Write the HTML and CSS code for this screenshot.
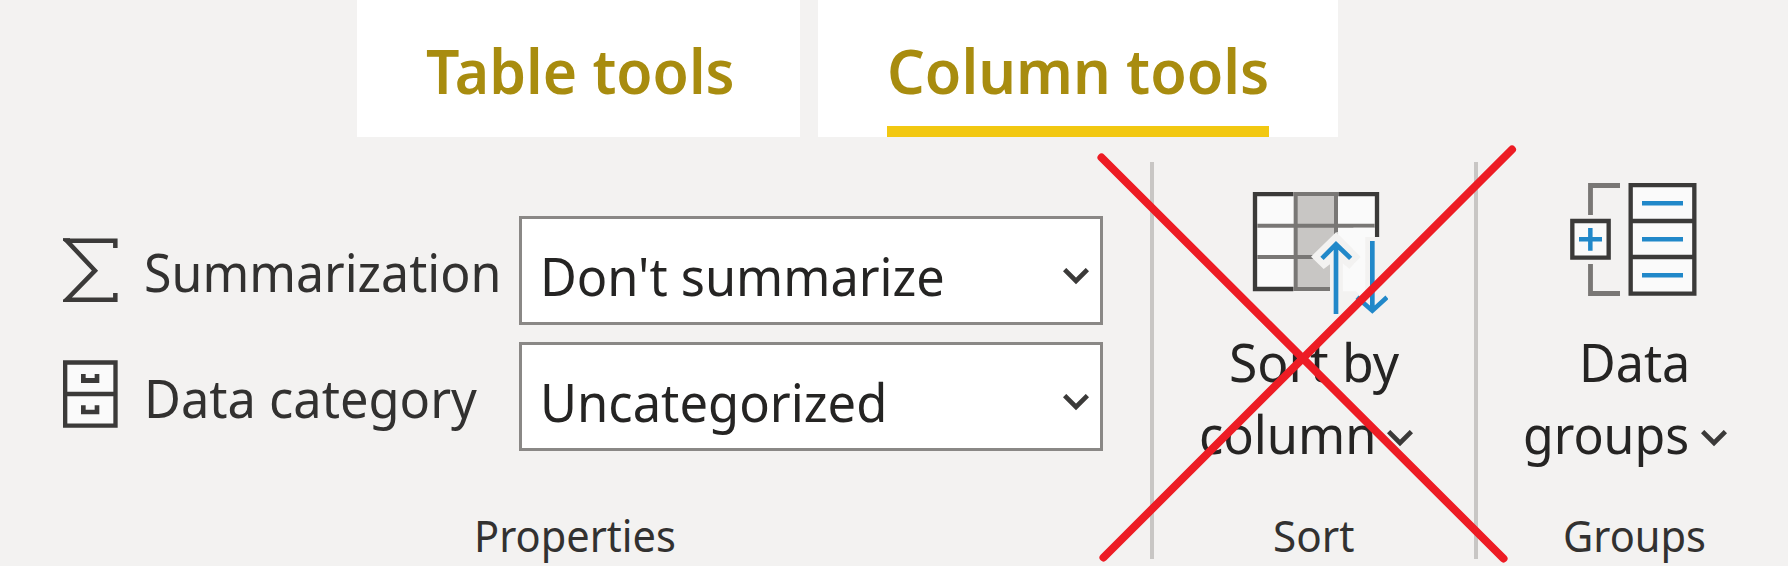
FILE: index.html
```
<!DOCTYPE html>
<html lang="en">
<head>
<meta charset="utf-8">
<title>Column tools</title>
<link rel="stylesheet" href="styles.css">
</head>
<body>
<div class="app">
  <nav class="tabs">
    <div class="tab tab-table"><span class="fit t-table">Table tools</span></div>
    <div class="tab tab-column active"><span class="fit t-column">Column tools</span></div>
  </nav>
  <main class="ribbon">
    <section class="group properties">
      <div class="fields">
        <div class="field">
          <svg class="field-icon" width="55" height="64" viewBox="39 54 165 192"><path d="M196 84V62H50L135 152L50 239H196V219" fill="none" stroke="#3b3a39" stroke-width="13.5"/><path d="M39 55H60V69H52L39 62ZM39 246H60V232H52L39 239Z" fill="#3b3a39"/></svg>
          <span class="fit label t-summarization">Summarization</span>
          <div class="select"><span class="fit t-dont">Don't summarize</span><svg class="chevron" width="26" height="17" viewBox="0 0 26 17"><path d="M1.6 1.6L13 13L24.4 1.6"/></svg></div>
        </div>
        <div class="field">
          <svg class="field-icon" width="55" height="68" viewBox="39 420 165 204"><path d="M45.500 427.500H196.500V617H45.500ZM45.500 522H196.500" fill="#fafafa" stroke="#3b3a39" stroke-width="13"/><path d="M93 462H107V474H134V462H148V489H93ZM93 556H107V569H134V556H148V583H93Z" fill="#3b3a39"/></svg>
          <span class="fit label t-category">Data category</span>
          <div class="select"><span class="fit t-uncat">Uncategorized</span><svg class="chevron" width="26" height="17" viewBox="0 0 26 17"><path d="M1.6 1.6L13 13L24.4 1.6"/></svg></div>
        </div>
      </div>
      <div class="caption"><span class="fit t-properties">Properties</span></div>
    </section>
    <section class="group sort">
      <svg class="big-icon" width="136" height="122" viewBox="36 36 408 366">
        <path d="M45 42H411V327H45Z" fill="#fafafa"/>
        <path d="M167 42H288V327H167Z" fill="#c8c6c4"/>
        <path d="M160 42H45V327H160M295 42H411V171" fill="none" stroke="#3b3a39" stroke-width="13"/>
        <path d="M160 42H295M160 327H270M52 137H404M52 231H220M167 42V327M288 42V165" fill="none" stroke="#797775" stroke-width="12"/>
        <path d="M404 171H420V340H404Z" fill="#f3f2f1"/>
        <path d="M270 334V253L251 267L213 230L288 157L361 230L328 266L308 250V334Z" fill="#f3f2f1"/>
        <path d="M308 250L328 266L361 230L340 209V143H404V171H376V357L358 345L348 334H308Z" fill="#fafafa"/>
        <path d="M288 157L361 230L328 266L308 248V334H295V157ZM376 171H404V340H376Z" fill="#f3f2f1"/>
        <path d="M288 402V194M246 235L288 193L332 235M397 183V390M351 352L397 392L441 352" fill="none" stroke="#2188c9" stroke-width="14"/>
      </svg>
      <div class="line"><span class="fit t-sortby">Sort by</span></div>
      <div class="line menu"><span class="fit t-col">column</span><svg class="chevron" width="26" height="17" viewBox="0 0 26 17"><path d="M1.6 1.6L13 13L24.4 1.6"/></svg></div>
      <div class="caption"><span class="fit t-sort">Sort</span></div>
    </section>
    <section class="group groups">
      <svg class="big-icon" width="127" height="113" viewBox="30 39 381 339">
        <path d="M212 45H403V371H212ZM212 153H403M212 261H403M37 153H146V263H37Z" fill="#fafafa" stroke="#3b3a39" stroke-width="13"/>
        <path d="M180 46.500H91.500V135M91.500 282V370.500H180" fill="none" stroke="#797775" stroke-width="14.500"/>
        <path d="M246 99.500H369M246 208H369M246 316H369M57 208H126M91 174V242" fill="none" stroke="#2188c9" stroke-width="13.500"/>
      </svg>
      <div class="line"><span class="fit t-data">Data</span></div>
      <div class="line menu"><span class="fit t-grp">groups</span><svg class="chevron" width="26" height="17" viewBox="0 0 26 17"><path d="M1.6 1.6L13 13L24.4 1.6"/></svg></div>
      <div class="caption"><span class="fit t-groups">Groups</span></div>
    </section>
  </main>
  <svg class="cross" width="1788" height="566" viewBox="0 0 1788 566"><path d="M1101.500 157.500L1503.500 558.500M1512 149.500L1103.500 557.500"/></svg>
</div>
</body>
</html>
```
FILE: styles.css
```
* { box-sizing: border-box; }
body { margin: 0; }
.app {
  position: relative;
  width: 1788px;
  height: 566px;
  overflow: hidden;
  background: #f3f2f1;
  color: #252423;
  font: 370 53px/72px "Noto Sans", sans-serif;
}
svg { display: block; flex: none; }

/* Text runs are condensed horizontally; --w is the natural width, --k the ratio. */
.fit {
  display: block;
  flex: none;
  width: calc(var(--w) * var(--k) * 1px);
  white-space: nowrap;
  transform: scaleX(var(--k));
  transform-origin: 0 50%;
}
.t-table { --w: 325.1; --k: .949; }
.t-column { --w: 399.9; --k: .956; }
.t-summarization { --w: 378.5; --k: .944; }
.t-category { --w: 348.8; --k: .954; }
.t-dont { --w: 425.2; --k: .952; }
.t-uncat { --w: 363.3; --k: .956; }
.t-sortby { --w: 174.5; --k: .974; }
.t-col { --w: 186.2; --k: .953; }
.t-data { --w: 117.3; --k: .949; margin-left: 4px; }
.t-grp { --w: 176.2; --k: .943; }
.t-properties { --w: 216.1; --k: .934; }
.t-sort { --w: 85.8; --k: .949; }
.t-groups { --w: 153; --k: .935; margin-left: 3px; }

.tabs { display: flex; gap: 18px; height: 137px; padding-left: 357px; }
.tab {
  height: 137px;
  padding: 30px 69px 0;
  background: #fff;
  color: #a88c0f;
  font-size: 62px;
  font-weight: 600;
  line-height: 80px;
}
.tab-table { width: 443px; }
.tab-column { width: 520px; }
.tab.active::after {
  content: "";
  display: block;
  height: 11px;
  margin-top: 16px;
  background: #f2c811;
}

.ribbon { display: grid; grid-template-columns: 1150px 324px 314px; height: 429px; padding: 25px 0 7px; }
.group { display: flex; flex-direction: column; }
.sort, .groups { align-items: center; border-left: 4px solid #c8c6c4; }
.sort { padding-top: 30px; }
.groups { padding-top: 21px; }

.fields { display: grid; gap: 18px; padding: 54px 0 0 63px; }
.field { display: grid; grid-template-columns: 81px 375px 584px; height: 108px; align-items: start; }
.field-icon { margin-top: 22px; }
.field:last-child .field-icon { margin-top: 18px; }
.label { padding-top: 3px; line-height: 106px; color: #323130; }
.select {
  display: flex;
  justify-content: space-between;
  height: 109px;
  padding: 17px 11px 0 18px;
  border: 3px solid #8a8886;
  background: #fff;
  line-height: 80px;
}
.chevron path { fill: none; stroke: #3b3a39; stroke-width: 4.7; }
.select .chevron { margin-top: 32px; }

.line { height: 72px; }
.sort .big-icon { margin: 0 0 12px 12px; }
.groups .big-icon { margin-bottom: 30px; }
.menu { display: flex; gap: 11px; }
.menu .chevron { margin-top: 32px; }
.sort .menu { margin-right: 16px; }
.groups .menu { margin-right: 16px; }
.caption {
  display: flex;
  justify-content: center;
  margin: auto 0 -1px;
  color: #323130;
  font-size: 44.5px;
  line-height: 50px;
}

.cross { position: absolute; left: 0; top: 0; }
.cross path { fill: none; stroke: #ed1c24; stroke-width: 8; stroke-linecap: round; }
```
